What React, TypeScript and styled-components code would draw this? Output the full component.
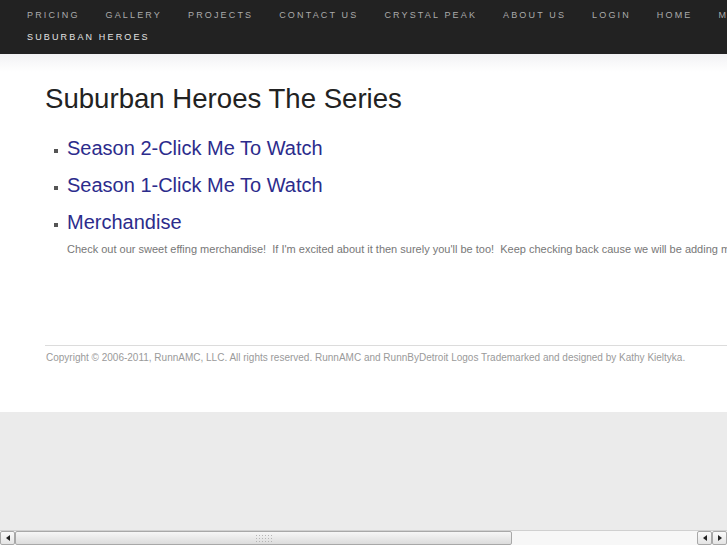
import React from "react";
import styled, { createGlobalStyle } from "styled-components";

const GlobalStyle = createGlobalStyle`
  html, body {
    margin: 0;
    padding: 0;
    height: 100%;
    overflow: hidden;
  }
  body {
    font-family: "Liberation Sans", Arial, Helvetica, sans-serif;
    background: #ebebeb;
  }
  #root {
    height: 100%;
  }
`;

const Page = styled.div`
  display: flex;
  flex-direction: column;
  height: 100%;
`;

const Nav = styled.nav`
  background: #222222;
  height: 54px;
  flex-shrink: 0;
  padding: 4px 0 0 27px;
  box-sizing: border-box;
  overflow: hidden;
`;

const NavList = styled.ul`
  display: flex;
  flex-wrap: wrap;
  width: 920px;
  margin: 0;
  padding: 0;
  list-style: none;
`;

const NavItem = styled.li<{ $active?: boolean }>`
  margin-right: 26px;
  line-height: 22px;
  font-size: 9px;
  letter-spacing: 2.15px;
  text-transform: uppercase;
  white-space: nowrap;
  color: ${p => (p.$active ? "#e2e2e2" : "#ababab")};
`;

const Content = styled.main`
  background: linear-gradient(#f2f2f4 0, #ffffff 18px);
  height: 358px;
  flex-shrink: 0;
  padding: 29px 0 0 45px;
  box-sizing: border-box;
  overflow: hidden;
`;

const Title = styled.h1`
  margin: 0;
  font-size: 27.6px;
  line-height: 32px;
  font-weight: normal;
  color: #222222;
  white-space: nowrap;
`;

const Links = styled.ul`
  margin: 21px 0 0;
  padding: 0 0 0 22px;
  list-style: none;
`;

const LinkItem = styled.li`
  position: relative;
  margin-bottom: 13px;

  &::before {
    content: "";
    position: absolute;
    left: -13px;
    top: 13px;
    width: 4px;
    height: 4px;
    background: #555555;
  }
`;

const LinkText = styled.a`
  display: block;
  font-size: 20px;
  line-height: 24px;
  color: #2c2c8c;
  text-decoration: none;
  white-space: nowrap;
`;

const Blurb = styled.p`
  margin: 7px 0 0;
  font-size: 11px;
  line-height: 16px;
  color: #777777;
  white-space: pre;
`;

const Rule = styled.hr`
  margin: 88px 0 0;
  border: 0;
  border-top: 1px solid #dcdcdc;
  width: 960px;
`;

const Copyright = styled.p`
  margin: 5px 0 0 1px;
  font-size: 10px;
  line-height: 14px;
  color: #9a9a9a;
  white-space: nowrap;
`;

const Filler = styled.div`
  flex: 1;
  background: #ebebeb;
`;

const Scrollbar = styled.div`
  display: flex;
  height: 15px;
  flex-shrink: 0;
  background: #f7f7f7;
  border-top: 1px solid #d0d0d0;
  box-sizing: border-box;
`;

const ArrowButton = styled.div`
  width: 15px;
  height: 14px;
  box-sizing: border-box;
  border: 1px solid #a8a8a8;
  border-radius: 2px;
  background: linear-gradient(#fbfbfb, #e4e4e4);
  display: flex;
  align-items: center;
  justify-content: center;
  flex-shrink: 0;
`;

const Arrow = styled.span<{ $dir: "left" | "right" }>`
  width: 0;
  height: 0;
  border-top: 3.5px solid transparent;
  border-bottom: 3.5px solid transparent;
  ${p =>
    p.$dir === "left"
      ? "border-right: 4px solid #222;"
      : "border-left: 4px solid #222;"}
`;

const Thumb = styled.div`
  width: 497px;
  height: 14px;
  box-sizing: border-box;
  border: 1px solid #a8a8a8;
  border-radius: 2px;
  background: linear-gradient(#f6f6f6, #dcdcdc);
  display: flex;
  align-items: center;
  justify-content: center;
  flex-shrink: 0;
`;

const Grip = styled.span`
  width: 17px;
  height: 8px;
  background-image: radial-gradient(circle, #b5b5b5 0.8px, transparent 1px);
  background-size: 3px 3px;
`;

const Track = styled.div`
  flex: 1;
`;

const navItems = [
  "Pricing",
  "Gallery",
  "Projects",
  "Contact Us",
  "Crystal Peak",
  "About Us",
  "Login",
  "Home",
  "Merchandise",
];

export default function App() {
  return (
    <Page>
      <GlobalStyle />
      <Nav>
        <NavList>
          {navItems.map(x => (
            <NavItem key={x}>{x}</NavItem>
          ))}
          <NavItem $active>Suburban Heroes</NavItem>
        </NavList>
      </Nav>
      <Content>
        <Title>Suburban Heroes The Series</Title>
        <Links>
          <LinkItem>
            <LinkText href="#">Season 2-Click Me To Watch</LinkText>
          </LinkItem>
          <LinkItem>
            <LinkText href="#">Season 1-Click Me To Watch</LinkText>
          </LinkItem>
          <LinkItem>
            <LinkText href="#">Merchandise</LinkText>
            <Blurb>
              {"Check out our sweet effing merchandise!  If I'm excited about it then surely you'll be too!  Keep checking back cause we will be adding more stuff soon."}
            </Blurb>
          </LinkItem>
        </Links>
        <Rule />
        <Copyright>
          Copyright © 2006-2011, RunnAMC, LLC. All rights reserved. RunnAMC and RunnByDetroit Logos Trademarked and designed by Kathy Kieltyka.
        </Copyright>
      </Content>
      <Filler />
      <Scrollbar>
        <ArrowButton>
          <Arrow $dir="left" />
        </ArrowButton>
        <Thumb>
          <Grip />
        </Thumb>
        <Track />
        <ArrowButton>
          <Arrow $dir="left" />
        </ArrowButton>
        <ArrowButton>
          <Arrow $dir="right" />
        </ArrowButton>
      </Scrollbar>
    </Page>
  );
}
